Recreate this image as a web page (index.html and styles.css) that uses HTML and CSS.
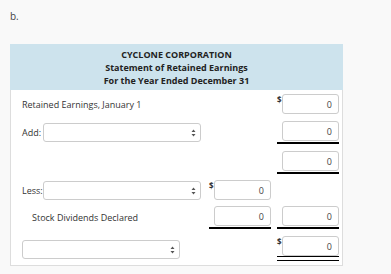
FILE: index.html
```html
<!DOCTYPE html>
<html lang="en">
<head>
  <meta charset="UTF-8" />
  <title>Statement of Retained Earnings</title>
  <link rel="stylesheet" href="styles.css">
</head>
<body>

  <p class="part">b.</p>

  <div class="statement">
    <div class="statement-head">
      <div>CYCLONE CORPORATION</div>
      <div>Statement of Retained Earnings</div>
      <div>For the Year Ended December 31</div>
    </div>

    <div class="statement-body">
      <div class="row r1">
        <div class="desc">Retained Earnings, January 1</div>
        <div class="cell"></div>
        <div class="cell"><span class="cur">$</span><input type="text" value="0"></div>
      </div>

      <div class="row r2">
        <div class="desc">
          <label>Add:</label>
          <div class="pick">
            <select><option></option></select>
            <svg class="caret" width="5" height="8" viewBox="0 0 5 8"><path d="M2.5 0.5 L4.5 3 L0.5 3 Z M2.5 7.5 L4.5 5 L0.5 5 Z" fill="#555"/></svg>
          </div>
        </div>
        <div class="cell"></div>
        <div class="cell line"><span class="cur"></span><input type="text" value="0"></div>
      </div>

      <div class="row r3">
        <div class="desc"></div>
        <div class="cell"></div>
        <div class="cell line"><span class="cur"></span><input type="text" value="0"></div>
      </div>

      <div class="row r4">
        <div class="desc">
          <label>Less:</label>
          <div class="pick">
            <select><option></option></select>
            <svg class="caret" width="5" height="8" viewBox="0 0 5 8"><path d="M2.5 0.5 L4.5 3 L0.5 3 Z M2.5 7.5 L4.5 5 L0.5 5 Z" fill="#555"/></svg>
          </div>
        </div>
        <div class="cell"><span class="cur">$</span><input type="text" value="0"></div>
        <div class="cell"></div>
      </div>

      <div class="row r5">
        <div class="desc sub">Stock Dividends Declared</div>
        <div class="cell line"><span class="cur"></span><input type="text" value="0"></div>
        <div class="cell line"><span class="cur"></span><input type="text" value="0"></div>
      </div>

      <div class="row r6">
        <div class="desc">
          <div class="pick wide">
            <select><option></option></select>
            <svg class="caret" width="5" height="8" viewBox="0 0 5 8"><path d="M2.5 0.5 L4.5 3 L0.5 3 Z M2.5 7.5 L4.5 5 L0.5 5 Z" fill="#555"/></svg>
          </div>
        </div>
        <div class="cell"></div>
        <div class="cell total">
          <div class="total-in"><span class="cur">$</span><input type="text" value="0"></div>
        </div>
      </div>
    </div>
  </div>

</body>
</html>
```

FILE: styles.css
```css
body {
  font-family: "Open Sans", "Liberation Sans", sans-serif;
  margin: 0;
  padding: 0 10px;
  background: #f9f9f9;
  color: #333;
  font-size: 9px;
}

.part {
  margin: 0;
  padding-top: 9px;
  height: 35px;
  font-size: 10px;
  color: #444;
}

.statement {
  width: 331px;
  border: 1px solid #ddd;
  border-top: none;
  background: #fff;
}

.statement-head {
  background: #cde3ed;
  text-align: center;
  font-weight: 700;
  font-size: 9px;
  line-height: 13px;
  color: #222;
  padding: 4px 0 3px;
  margin-left: -1px;
  margin-right: -1px;
}

.statement-body {
  padding: 4px 3px 4px 11px;
}

.row {
  display: flex;
  align-items: center;
  gap: 6px;
}

.r2 { margin-top: 7px; }
.r3 { margin-top: 7px; }
.r4 { margin-top: 6px; }
.r5 { margin-top: 6px; }
.r6 { margin-top: 7px; align-items: flex-start; }

.desc {
  flex: 1;
  display: flex;
  align-items: center;
}

.desc.sub {
  padding-left: 10px;
}

.desc label {
  width: 21px;
}

.cell {
  width: 62px;
  display: flex;
  align-items: center;
}

.cur {
  width: 5px;
  font-size: 8px;
  font-weight: 700;
  line-height: 8px;
  align-self: flex-start;
  margin-top: 2px;
}

.cell input {
  width: 57px;
  height: 20px;
  box-sizing: border-box;
  border: 1px solid #ccc;
  border-radius: 3px;
  text-align: right;
  padding: 0 6px;
  font: 9px "Open Sans", "Liberation Sans", sans-serif;
  color: #444;
  background: #fff;
}

.cell.line {
  border-bottom: 2px solid #000;
  padding-bottom: 1px;
}

.total {
  display: block;
  border-bottom: 1px solid #000;
  padding-bottom: 3px;
}

.total-in {
  display: flex;
  align-items: center;
  border-bottom: 1px solid #000;
}

.pick {
  position: relative;
  width: 158px;
  height: 19px;
}

.pick.wide {
  margin-top: 4px;
}

.pick select {
  appearance: none;
  -webkit-appearance: none;
  width: 100%;
  height: 100%;
  box-sizing: border-box;
  border: 1px solid #ccc;
  border-radius: 3px;
  background: #fff;
}

.caret {
  position: absolute;
  right: 5px;
  top: 6px;
}
```
